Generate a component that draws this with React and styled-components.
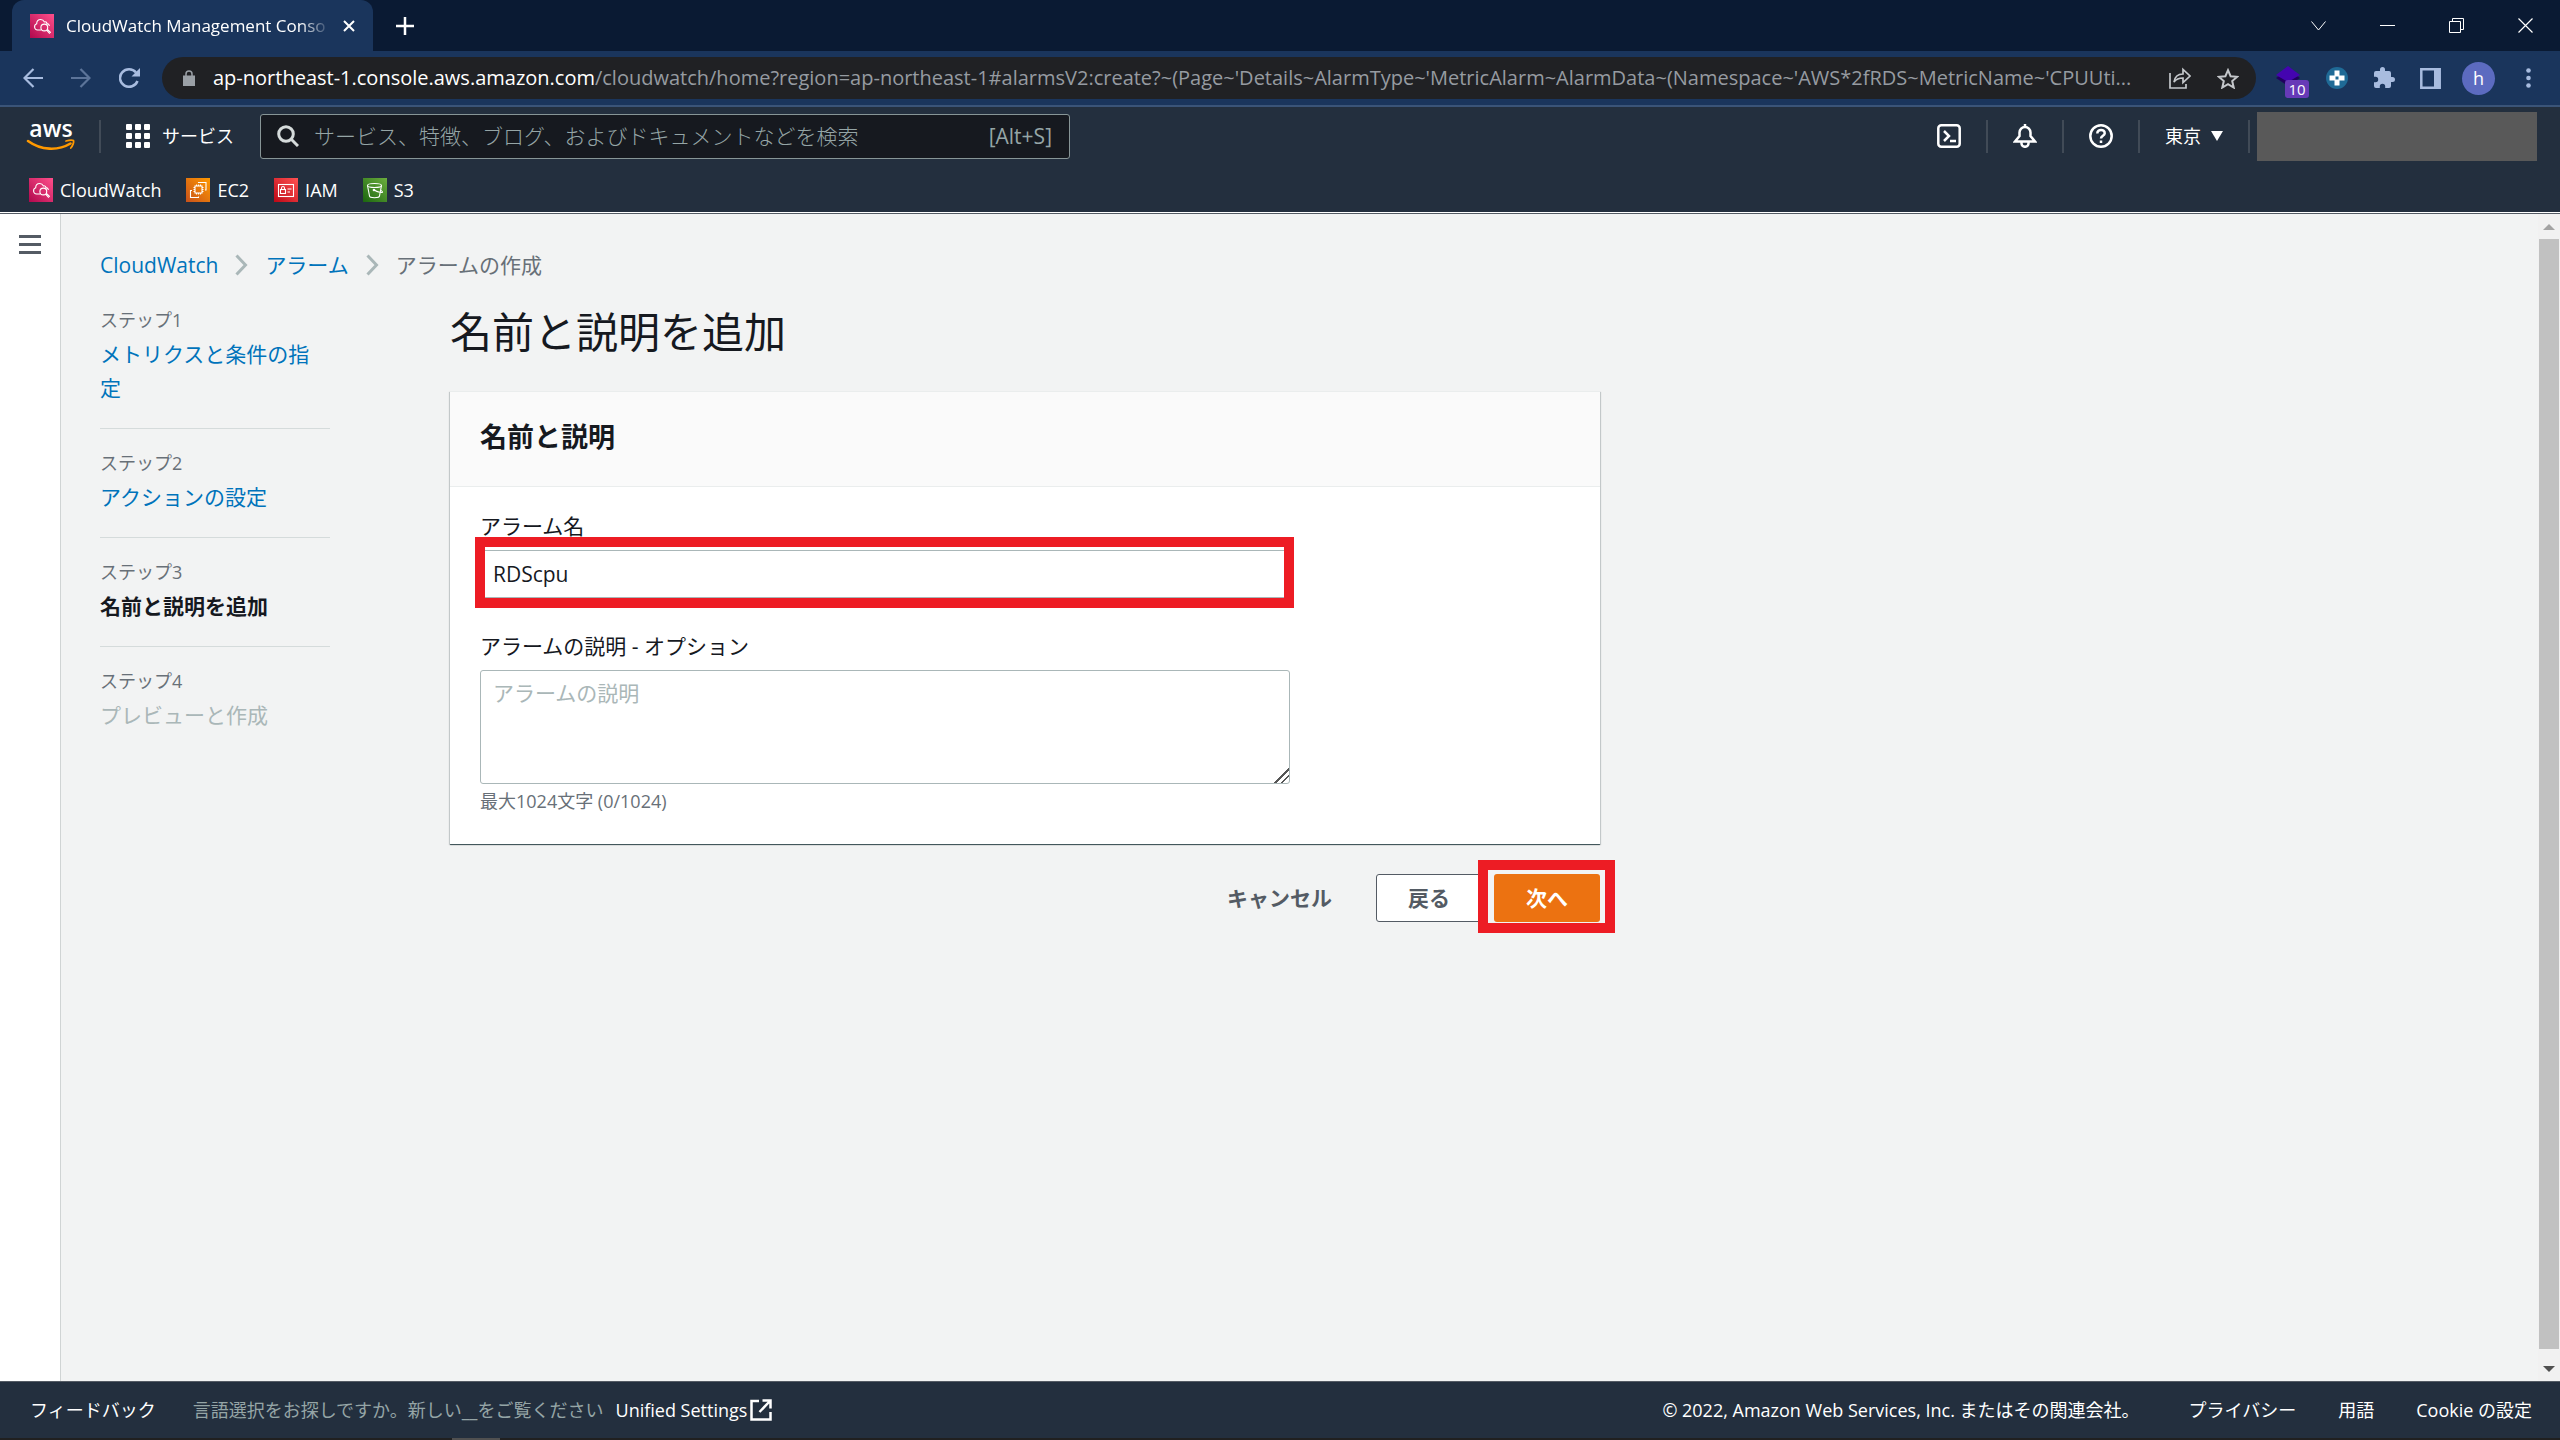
import React, { useState } from 'react';
import styled, { createGlobalStyle, css } from 'styled-components';

const GlobalStyle = createGlobalStyle`
  *, *::before, *::after { box-sizing: border-box; }
  html, body { margin: 0; padding: 0; }
  body {
    font-family: "Open Sans", "Noto Sans CJK JP", sans-serif;
    font-size: 21px;
    line-height: 34px;
    color: #16191f;
    background: #f2f3f3;
  }
  a { text-decoration: none; }
  button { font: inherit; border: 0; padding: 0; background: none; cursor: pointer; }
  svg { display: block; flex: none; }
`;

const Screen = styled.div`
  display: flex;
  flex-direction: column;
  height: 100vh;
`;

/* ---------- browser frame ---------- */
const TitleBar = styled.div`
  display: flex;
  align-items: stretch;
  height: 51px;
  padding-left: 12px;
  background: #0a1a33;
  color: #fff;
`;

const Tab = styled.div`
  display: flex;
  align-items: center;
  width: 361px;
  padding: 0 16px 0 18px;
  border-radius: 12px 12px 0 0;
  background: #1a355c;
`;

const TabTitle = styled.span`
  flex: 1;
  margin: 0 10px 0 12px;
  white-space: nowrap;
  font-size: 17px;
  mask-image: linear-gradient(to right, #000 88%, transparent);
`;

const IconButton = styled.button`
  display: flex;
  align-items: center;
  justify-content: center;
  width: ${(p) => p.$w || 24}px;
  color: ${(p) => p.$color || '#fff'};
`;

const NewTab = styled(IconButton)`
  margin-left: 20px;
`;

const WindowControls = styled.div`
  display: flex;
  margin-left: auto;
`;

const Toolbar = styled.div`
  display: flex;
  align-items: center;
  height: 56px;
  padding: 0 20px 0 21px;
  border-bottom: 2px solid #3a5478;
  background: #1a355c;
`;

const NavButtons = styled.div`
  display: flex;
  gap: 24px;
  margin-right: 21px;
`;

const Omnibox = styled.div`
  display: flex;
  align-items: center;
  flex: 1;
  min-width: 0;
  height: 42px;
  padding: 0 16px 0 21px;
  border-radius: 21px;
  background: #202124;
`;

const Url = styled.span`
  flex: 1;
  margin: 0 20px 0 18px;
  white-space: nowrap;
  font-size: 20px;
  color: #969ba1;
`;

const Host = styled.span`
  color: #fff;
`;

const OmniActions = styled.div`
  display: flex;
  gap: 24px;
`;

const Extensions = styled.div`
  display: flex;
  align-items: center;
  gap: 25px;
  margin-left: 20px;
`;

const ExtensionSlot = styled.div`
  position: relative;
  width: 25px;
  height: 24px;
`;

const Badge = styled.span`
  position: absolute;
  left: 9px;
  top: 14px;
  width: 24px;
  height: 18px;
  border-radius: 3px;
  background: #673ab7;
  color: #fff;
  font-size: 15px;
  line-height: 18px;
  text-align: center;
`;

const Avatar = styled.button`
  width: 33px;
  height: 33px;
  margin: 0 -4px;
  border-radius: 50%;
  background: #5c6bc0;
  color: #fff;
  font-size: 18px;
  line-height: 33px;
`;

/* ---------- console header ---------- */
const Header = styled.header`
  height: 106px;
  padding: 2px 23px 0 27px;
  border-bottom: 1px solid #fff;
  background: #232f3e;
  color: #fff;
`;

const HeaderRow = styled.div`
  display: flex;
  align-items: center;
  height: 54px;
`;

const LogoLink = styled.a`
  margin-right: 24px;
`;

const Divider = styled.span`
  width: 2px;
  height: 33px;
  background: #414b57;
`;

const ServicesButton = styled.button`
  display: flex;
  align-items: center;
  gap: 12px;
  margin: 0 26px 0 25px;
  color: #fff;
  font-size: 18px;
  line-height: 32px;
  white-space: nowrap;
`;

const SearchBox = styled.label`
  display: flex;
  align-items: center;
  width: 810px;
  height: 45px;
  padding: 0 17px 0 16px;
  border: 1px solid #879596;
  border-radius: 3px;
  background: #16191f;
  color: #95a5a6;
`;

const SearchInput = styled.input`
  flex: 1;
  min-width: 0;
  margin-left: 15px;
  padding: 0;
  border: 0;
  outline: 0;
  background: none;
  color: #fff;
  font: inherit;
  font-weight: 300;
  &::placeholder { color: #95a5a6; opacity: 1; }
`;

const HeaderTools = styled.div`
  display: flex;
  align-items: center;
  gap: 25px;
  margin-left: auto;
`;

const RegionButton = styled.button`
  display: flex;
  align-items: center;
  gap: 10px;
  color: #fff;
  font-size: 18px;
`;

const Account = styled.div`
  width: 280px;
  height: 49px;
  margin-left: -18px;
  background: #595959;
`;

const Favorites = styled.nav`
  display: flex;
  align-items: center;
  gap: 25px;
  height: 48px;
  padding: 6px 0 0 2px;
`;

const Favorite = styled.a`
  display: flex;
  align-items: center;
  gap: 7px;
  color: #fff;
  font-size: 18px;
  font-weight: 500;
`;

/* ---------- page ---------- */
const Body = styled.div`
  display: flex;
  flex: 1;
  min-height: 0;
  border-top: 1px solid #545b64;
`;

const Rail = styled.aside`
  display: flex;
  align-items: flex-start;
  justify-content: center;
  width: 61px;
  padding-top: 21px;
  border-right: 1px solid #d0d4d4;
  background: #fff;
`;

const Main = styled.main`
  flex: 1;
  padding: 34px 39px;
`;

const Breadcrumbs = styled.nav`
  display: flex;
  align-items: center;
  gap: 17px;
`;

const Link = styled.a`
  color: #0073bb;
`;

const Muted = styled.span`
  color: #687078;
`;

const Columns = styled.div`
  display: flex;
  align-items: flex-start;
  gap: 120px;
  margin-top: 22px;
`;

const Steps = styled.ol`
  width: 230px;
  margin: 0;
  padding: 0;
  list-style: none;
`;

const Step = styled.li`
  padding-bottom: 23px;
  & + & {
    padding-top: 18px;
    border-top: 1px solid #d5dbdb;
  }
`;

const StepLabel = styled.div`
  color: #687078;
  font-size: 18px;
  line-height: 33px;
`;

const StepTitle = styled.span`
  display: block;
  ${(p) => p.$state === 'current' && css`font-weight: 700;`}
  ${(p) => p.$state === 'future' && css`color: #aab7b8;`}
`;

const Wizard = styled.form`
  flex: 0 1 1150px;
`;

const Title = styled.h1`
  margin: 0 0 31px;
  font-size: 42px;
  font-weight: 400;
  line-height: 56px;
`;

const Card = styled.section`
  background: #fff;
  box-shadow: 0 1px 1px 0 rgba(0, 28, 36, 0.3), 1px 1px 1px 0 rgba(0, 28, 36, 0.15),
    -1px 1px 1px 0 rgba(0, 28, 36, 0.15), 0 1px 0 0 #879596;
  border-top: 1px solid #eaeded;
`;

const CardHeader = styled.h2`
  margin: 0;
  padding: 24px 30px 29px;
  border-bottom: 1px solid #eaeded;
  background: #fafafa;
  font-size: 27px;
  font-weight: 700;
  line-height: 41px;
`;

const CardBody = styled.div`
  display: flex;
  flex-direction: column;
  gap: 31px;
  padding: 22px 310px 26px 30px;
`;

const Field = styled.div`
  display: flex;
  flex-direction: column;
`;

const FieldLabel = styled.label`
  margin-bottom: 7px;
`;

const controlStyle = css`
  width: 100%;
  padding: 5px 12px;
  border: 1px solid #aab7b8;
  border-radius: 3px;
  outline: 0;
  background: #fff;
  color: #16191f;
  font: inherit;
  &::placeholder { color: #aab7b8; opacity: 1; }
`;

const TextInput = styled.input`
  ${controlStyle}
  display: block;
  height: 48px;
`;

const TextArea = styled.textarea`
  ${controlStyle}
  display: block;
  height: 114px;
  resize: vertical;
  &::-webkit-resizer {
    background: linear-gradient(
      135deg,
      transparent 50%, #555 50% 57%,
      transparent 57% 72%, #555 72% 79%,
      transparent 79%
    );
  }
`;

const Hint = styled.div`
  padding-top: 1px;
  color: #687078;
  font-size: 18px;
  line-height: 33px;
`;

const Marked = styled.div`
  position: relative;
  &::after {
    content: "";
    position: absolute;
    inset: ${(p) => p.$inset};
    border: 10px solid #ed1c24;
    pointer-events: none;
  }
`;

const Actions = styled.div`
  display: flex;
  justify-content: flex-end;
  gap: 12px;
  margin-top: 30px;
`;

const Button = styled.button`
  height: 48px;
  padding: 0 31px;
  border: 1px solid transparent;
  border-radius: 3px;
  color: #545b64;
  font-weight: 700;
  ${(p) => p.$kind === 'normal' && css`border-color: #545b64; background: #fff;`}
  ${(p) => p.$kind === 'primary' && css`background: #ec7211; color: #fff;`}
`;

const Scrollbar = styled.div`
  display: flex;
  flex-direction: column;
  align-items: center;
  width: 22px;
  padding: 10px 0 9px;
  background: #f1f1f1;
`;

const Thumb = styled.div`
  flex: 1;
  width: 20px;
  margin: 9px 0 17px;
  background: #c1c1c1;
`;

/* ---------- footer ---------- */
const Footer = styled.footer`
  display: flex;
  align-items: center;
  height: 57px;
  padding: 0 28px 0 30px;
  border-top: 1px solid #545b64;
  background: #232f3e;
  color: #fff;
  font-size: 18px;
  white-space: nowrap;
`;

const FooterLink = styled.a`
  color: #fff;
`;

const LanguageNote = styled.div`
  display: flex;
  align-items: center;
  margin-left: 37px;
  color: #95a5a6;
`;

const SettingsLink = styled(FooterLink)`
  display: flex;
  align-items: center;
  gap: 3px;
  margin-left: 12px;
  font-weight: 500;
`;

const Legal = styled.div`
  display: flex;
  gap: 42px;
  margin-left: auto;
`;

const Copyright = styled.span`
  margin-right: 7px;
`;

const Taskbar = styled.div`
  display: flex;
  height: 2px;
  padding-left: 452px;
  background: #202020;
  &::before { content: ""; width: 48px; background: #505050; }
`;

/* ---------- service icons ---------- */
const ServiceIcon = ({ id, from, to, children }) => (
  <svg width="24" height="24" viewBox="0 0 24 24" fill="none" stroke="#fff" strokeWidth="1.1" aria-hidden="true">
    <defs>
      <linearGradient id={id} x1="0" y1="1" x2="1" y2="0">
        <stop offset="0" stopColor={from} />
        <stop offset="1" stopColor={to} />
      </linearGradient>
    </defs>
    <rect width="24" height="24" fill={`url(#${id})`} stroke="none" />
    {children}
  </svg>
);

const CloudWatchIcon = ({ id }) => (
  <ServiceIcon id={id} from="#b0084d" to="#ff4f8b">
    <path d="M11 16H7.5a3.200 3.200 0 0 1-.8-6.200c0-2.800 1.900-4.300 4-4.300 1.800 0 3 .9 3.600 2.400 1.400-.5 2.500.4 2.600 1.700 1.500.2 2.300 1 2.600 2.200" />
    <circle cx="14.300" cy="13.500" r="3.400" />
    <path d="M16.600 16.200l2.800 3.100 1-1-3-2.900" />
  </ServiceIcon>
);

const Ec2Icon = () => (
  <ServiceIcon id="ec2" from="#c8511b" to="#ff9900">
    <rect x="9" y="8" width="7" height="7" />
    <path d="M10.500 6.500V8M12.500 6.500V8M14.500 6.500V8M10.500 15v1.500M12.500 15v1.500M14.500 15v1.500M7.500 9.500H9M7.500 11.500H9M7.500 13.500H9M16 9.500h1.500M16 11.500h1.500M16 13.500h1.500" />
    <path d="M12.500 5V4.500h7.500V12h-1M6 12.500H4.500v7H12.500V18.500" />
  </ServiceIcon>
);

const IamIcon = () => (
  <ServiceIcon id="iam" from="#bd0816" to="#ff5252">
    <rect x="4.500" y="6.500" width="15" height="12" />
    <rect x="6.500" y="11.500" width="5" height="4" />
    <path d="M7.500 11.500V10a1.500 1.500 0 0 1 3 0v1.500M13.500 11h4M13.500 14h2.500" />
  </ServiceIcon>
);

const S3Icon = () => (
  <ServiceIcon id="s3" from="#1b660f" to="#6cae3e">
    <ellipse cx="11.500" cy="7.500" rx="7" ry="2" />
    <path d="M4.500 7.500l2 10.500c0 1 2 1.700 5 1.700s5-.7 5-1.700l2-10.500M11 12c4 2.300 8 3 8.500 2.200.3-.8-1.800-2-1.800-2" />
    <circle cx="11" cy="12" r=".8" />
  </ServiceIcon>
);

const AwsLogo = () => (
  <svg width="48" height="34" viewBox="0 0 48 34" overflow="visible" fill="none" aria-label="aws">
    <text x="24" y="18" textAnchor="middle" fill="#fff" fontFamily="Open Sans, sans-serif" fontWeight="600" fontSize="23">aws</text>
    <path d="M1 22c13 9.500 30 10 42.500 2.500" stroke="#ff9900" strokeWidth="2.600" strokeLinecap="round" />
    <path d="M39 22c3.500-1 6.500-1 7.500-.4.600 1.400-.6 5-2.700 7.400" stroke="#ff9900" strokeWidth="1.800" strokeLinecap="round" />
  </svg>
);

const Chevron = () => (
  <svg width="13" height="22" viewBox="0 0 13 22" fill="none" stroke="#aab7b8" strokeWidth="3" aria-hidden="true">
    <path d="M1.500 1.500l9 9.500-9 9.500" />
  </svg>
);

const steps = [
  { label: 'ステップ1', title: 'メトリクスと条件の指定', state: 'done' },
  { label: 'ステップ2', title: 'アクションの設定', state: 'done' },
  { label: 'ステップ3', title: '名前と説明を追加', state: 'current' },
  { label: 'ステップ4', title: 'プレビューと作成', state: 'future' },
];

function BrowserFrame() {
  return (
    <>
      <TitleBar>
        <Tab>
          <CloudWatchIcon id="tab-cw" />
          <TabTitle>CloudWatch Management Conso</TabTitle>
          <IconButton $w={16} aria-label="Close tab">
            <svg width="12" height="12" viewBox="0 0 12 12" stroke="currentColor" strokeWidth="2"><path d="M1 1l10 10M11 1L1 11" /></svg>
          </IconButton>
        </Tab>
        <NewTab aria-label="New tab">
          <svg width="18" height="18" viewBox="0 0 18 18" stroke="currentColor" strokeWidth="2.500"><path d="M9 0v18M0 9h18" /></svg>
        </NewTab>
        <WindowControls>
          <IconButton $w={69} aria-label="Search tabs">
            <svg width="15" height="10" viewBox="0 0 15 10" fill="none" stroke="currentColor"><path d="M.5 .5l7 8.500 7-8.500" /></svg>
          </IconButton>
          <IconButton $w={69} aria-label="Minimize">
            <svg width="15" height="1" viewBox="0 0 15 1" fill="currentColor"><path d="M0 0h15v1H0z" /></svg>
          </IconButton>
          <IconButton $w={69} aria-label="Restore">
            <svg width="15" height="15" viewBox="0 0 15 15" fill="none" stroke="currentColor"><path d="M.5 3.500h11v11H.5zM3.500 3.500v-3h11v11h-3" /></svg>
          </IconButton>
          <IconButton $w={69} aria-label="Close">
            <svg width="15" height="15" viewBox="0 0 15 15" stroke="currentColor" strokeWidth="1.200"><path d="M.5 .5l14 14M14.500 .5l-14 14" /></svg>
          </IconButton>
        </WindowControls>
      </TitleBar>
      <Toolbar>
        <NavButtons>
          <IconButton $color="#a8bcdf" aria-label="Back">
            <svg width="20" height="20" viewBox="0 0 20 20" fill="none" stroke="currentColor" strokeWidth="2.200"><path d="M20 10H2M10.500 1L1.500 10l9 9" /></svg>
          </IconButton>
          <IconButton $color="#5c7499" aria-label="Forward">
            <svg width="20" height="20" viewBox="0 0 20 20" fill="none" stroke="currentColor" strokeWidth="2.200"><path d="M0 10h18M9.500 1l9 9-9 9" /></svg>
          </IconButton>
          <IconButton $color="#a8bcdf" aria-label="Reload">
            <svg width="21" height="20" viewBox="0 0 21 20" fill="none" stroke="currentColor" strokeWidth="2.500"><path d="M18.500 13A9 8.700 0 1 1 17 4.500" /><path d="M21 0v8.500h-8.500z" fill="currentColor" stroke="none" /></svg>
          </IconButton>
        </NavButtons>
        <Omnibox>
          <svg width="12" height="16" viewBox="0 0 12 16" aria-hidden="true"><path d="M0 5.500h12V16H0z" fill="#9aa0a6" /><path d="M3 6V4a3 3 0 0 1 6 0v2" fill="none" stroke="#9aa0a6" strokeWidth="1.500" /></svg>
          <Url>
            <Host>ap-northeast-1.console.aws.amazon.com</Host>/cloudwatch/home?region=ap-northeast-1#alarmsV2:create?~(Page~'Details~AlarmType~'MetricAlarm~AlarmData~(Namespace~'AWS*2fRDS~MetricName~'CPUUti...
          </Url>
          <OmniActions>
            <IconButton $color="#c4c7cb" aria-label="Share">
              <svg width="22" height="22" viewBox="0 0 22 22" fill="none" stroke="currentColor" strokeWidth="1.700"><path d="M1 6v15h16v-4" /><path d="M5 15c.8-5.500 4-8 9-8V2.500L21 9l-7 6.500V11c-4 0-6.800 1-9 4z" /></svg>
            </IconButton>
            <IconButton $color="#c4c7cb" aria-label="Bookmark">
              <svg width="22" height="21" viewBox="0 0 22 21" fill="none" stroke="currentColor" strokeWidth="2"><path d="M11 2.200l2.600 6 6.600.6-5 4.300 1.500 6.400L11 16.100l-5.700 3.400 1.500-6.400-5-4.300 6.600-.6z" /></svg>
            </IconButton>
          </OmniActions>
        </Omnibox>
        <Extensions>
          <ExtensionSlot>
            <svg width="24" height="20" viewBox="0 0 24 20" aria-hidden="true"><path d="M12 4l12 8-12 8L0 12z" fill="#21005f" /><path d="M12 0l12 9-12 7L0 9z" fill="#4404b0" /></svg>
            <Badge>10</Badge>
          </ExtensionSlot>
          <svg width="22" height="22" viewBox="0 0 22 22" aria-hidden="true"><circle cx="11" cy="11" r="11" fill="#1f6a96" /><path d="M8.500 3.500h5v5h5v5h-5v5h-5v-5h-5v-5h5z" fill="#fff" /><path d="M9.500 9.500h3v3h-3z" fill="#1f6a96" /></svg>
          <IconButton $w={22} $color="#a8bcdf" aria-label="Extensions">
            <svg width="22" height="22" viewBox="1 1 22 22" fill="currentColor"><path d="M20.500 11H19V7a2 2 0 0 0-2-2h-4V3.500a2.500 2.500 0 0 0-5 0V5H4a2 2 0 0 0-2 2v3.800h1.500a2.700 2.700 0 0 1 0 5.400H2V20a2 2 0 0 0 2 2h3.800v-1.500a2.700 2.700 0 0 1 5.400 0V22H17a2 2 0 0 0 2-2v-4h1.500a2.500 2.500 0 0 0 0-5z" /></svg>
          </IconButton>
          <IconButton $w={21} $color="#a8bcdf" aria-label="Side panel">
            <svg width="21" height="21" viewBox="0 0 21 21" fill="none" stroke="currentColor" strokeWidth="2.500"><path d="M1.300 1.300h18.400v18.400H1.300z" /><path d="M14 1h6v19h-6z" fill="currentColor" stroke="none" /></svg>
          </IconButton>
          <Avatar>h</Avatar>
          <IconButton $w={24} $color="#a8bcdf" aria-label="Menu">
            <svg width="5" height="20" viewBox="0 0 5 20" fill="currentColor"><circle cx="2.500" cy="2.500" r="2.300" /><circle cx="2.500" cy="10" r="2.300" /><circle cx="2.500" cy="17.500" r="2.300" /></svg>
          </IconButton>
        </Extensions>
      </Toolbar>
    </>
  );
}

function ConsoleHeader() {
  return (
    <Header>
      <HeaderRow>
        <LogoLink href="#home"><AwsLogo /></LogoLink>
        <Divider />
        <ServicesButton>
          <svg width="24" height="24" viewBox="0 0 24 24" fill="currentColor">
            {[0, 9, 18].map((y) => [0, 9, 18].map((x) => <rect key={`${x}-${y}`} x={x} y={y} width="6" height="6" rx="1" />))}
          </svg>
          サービス
        </ServicesButton>
        <SearchBox>
          <svg width="22" height="22" viewBox="0 0 22 22" fill="none" stroke="#d5dbdb" strokeWidth="3" aria-hidden="true"><circle cx="9" cy="9" r="7.300" /><path d="M14 14l7 7" /></svg>
          <SearchInput aria-label="検索" placeholder="サービス、特徴、ブログ、およびドキュメントなどを検索" />
          [Alt+S]
        </SearchBox>
        <HeaderTools>
          <IconButton aria-label="CloudShell">
            <svg width="24" height="24" viewBox="0 0 24 24" fill="none" stroke="currentColor" strokeWidth="2.500"><rect x="1.300" y="1.300" width="21.400" height="21.400" rx="3" /><path d="M7 7l5 5-5 5M13 17h6" /></svg>
          </IconButton>
          <Divider />
          <IconButton aria-label="通知">
            <svg width="24" height="24" viewBox="0 0 24 24" fill="none" stroke="currentColor" strokeWidth="2.500"><path d="M12 0v3M2 17.500l4.500-5.500V8.500a5.500 5.500 0 0 1 11 0V12l4.500 5.500zM8.500 18v1.500a3.500 3.300 0 0 0 7 0V18" /></svg>
          </IconButton>
          <Divider />
          <IconButton aria-label="ヘルプ">
            <svg width="24" height="24" viewBox="0 0 24 24" fill="none" stroke="currentColor" strokeWidth="2.500"><circle cx="12" cy="12" r="10.700" /><path d="M8.300 9.500C8.300 4.500 16 5 15.700 9.300c-.2 2.400-3.700 2.500-3.700 5.200M12 16.500V19" /></svg>
          </IconButton>
          <Divider />
          <RegionButton>
            東京
            <svg width="12" height="10" viewBox="0 0 12 10" fill="currentColor" aria-hidden="true"><path d="M0 0h12L6 10z" /></svg>
          </RegionButton>
          <Divider />
          <Account />
        </HeaderTools>
      </HeaderRow>
      <Favorites>
        <Favorite href="#cloudwatch"><CloudWatchIcon id="fav-cw" />CloudWatch</Favorite>
        <Favorite href="#ec2"><Ec2Icon />EC2</Favorite>
        <Favorite href="#iam"><IamIcon />IAM</Favorite>
        <Favorite href="#s3"><S3Icon />S3</Favorite>
      </Favorites>
    </Header>
  );
}

function AlarmForm() {
  const [name, setName] = useState('RDScpu');
  const [description, setDescription] = useState('');
  return (
    <Wizard onSubmit={(e) => e.preventDefault()}>
      <Title>名前と説明を追加</Title>
      <Card>
        <CardHeader>名前と説明</CardHeader>
        <CardBody>
          <Field>
            <FieldLabel htmlFor="alarm-name">アラーム名</FieldLabel>
            <Marked $inset="-13px -4px -10px -5px">
              <TextInput id="alarm-name" value={name} onChange={(e) => setName(e.target.value)} />
            </Marked>
          </Field>
          <Field>
            <FieldLabel htmlFor="alarm-description">アラームの説明 - オプション</FieldLabel>
            <TextArea
              id="alarm-description"
              placeholder="アラームの説明"
              maxLength={1024}
              value={description}
              onChange={(e) => setDescription(e.target.value)}
            />
            <Hint>最大1024文字 ({description.length}/1024)</Hint>
          </Field>
        </CardBody>
      </Card>
      <Actions>
        <Button type="button">キャンセル</Button>
        <Button type="button" $kind="normal">戻る</Button>
        <Marked $inset="-14px -15px -11px -16px">
          <Button $kind="primary">次へ</Button>
        </Marked>
      </Actions>
    </Wizard>
  );
}

export default function App() {
  return (
    <Screen>
      <GlobalStyle />
      <BrowserFrame />
      <ConsoleHeader />
      <Body>
        <Rail>
          <IconButton $color="#545b64" aria-label="メニュー">
            <svg width="22" height="19" viewBox="0 0 22 19" fill="currentColor"><path d="M0 0h22v3H0zM0 8h22v3H0zM0 16h22v3H0z" /></svg>
          </IconButton>
        </Rail>
        <Main>
          <Breadcrumbs>
            <Link href="#cloudwatch">CloudWatch</Link>
            <Chevron />
            <Link href="#alarms">アラーム</Link>
            <Chevron />
            <Muted>アラームの作成</Muted>
          </Breadcrumbs>
          <Columns>
            <Steps>
              {steps.map((s) => (
                <Step key={s.label}>
                  <StepLabel>{s.label}</StepLabel>
                  <StepTitle $state={s.state}>
                    {s.state === 'done' ? <Link href="#step">{s.title}</Link> : s.title}
                  </StepTitle>
                </Step>
              ))}
            </Steps>
            <AlarmForm />
          </Columns>
        </Main>
        <Scrollbar>
          <svg width="12" height="6" viewBox="0 0 12 6" fill="#a3a3a3"><path d="M0 6l6-6 6 6z" /></svg>
          <Thumb />
          <svg width="12" height="6" viewBox="0 0 12 6" fill="#505050"><path d="M0 0h12L6 6z" /></svg>
        </Scrollbar>
      </Body>
      <Footer>
        <FooterLink href="#feedback">フィードバック</FooterLink>
        <LanguageNote>
          言語選択をお探しですか。新しい__をご覧ください
          <SettingsLink href="#settings">
            Unified Settings
            <svg width="22" height="22" viewBox="0 0 22 22" fill="none" stroke="currentColor" strokeWidth="2.500"><path d="M9 2H1.500v18.500h19V13M12.500 1.500h8v8M20 2L9.500 13" /></svg>
          </SettingsLink>
        </LanguageNote>
        <Legal>
          <Copyright>© 2022, Amazon Web Services, Inc. またはその関連会社。</Copyright>
          <FooterLink href="#privacy">プライバシー</FooterLink>
          <FooterLink href="#terms">用語</FooterLink>
          <FooterLink href="#cookies">Cookie の設定</FooterLink>
        </Legal>
      </Footer>
      <Taskbar />
    </Screen>
  );
}
